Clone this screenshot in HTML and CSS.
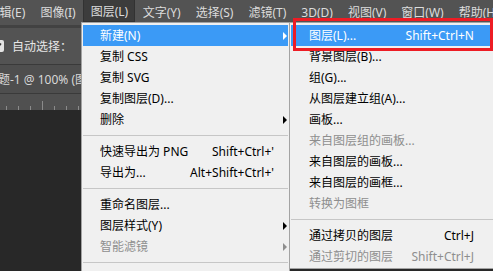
FILE: index.html
```html
<!DOCTYPE html>
<html lang="zh-CN">
<head>
    <meta charset="UTF-8">
    <meta name="viewport" content="width=device-width, initial-scale=1.0">
    <title>图层菜单</title>
    <link rel="stylesheet" href="styles.css">
</head>
<body>
   <div class="ps">
    <div class="menubar">
        <span class="mb-item first">编辑(E)</span>
        <span class="mb-item">图像(I)</span>
        <span class="mb-item active">图层(L)</span>
        <span class="mb-item">文字(Y)</span>
        <span class="mb-item">选择(S)</span>
        <span class="mb-item">滤镜(T)</span>
        <span class="mb-item">3D(D)</span>
        <span class="mb-item">视图(V)</span>
        <span class="mb-item">窗口(W)</span>
        <span class="mb-item">帮助(H)</span>
    </div>
    <div class="options">
        <span class="check">
            <svg width="12" height="12" viewBox="0 0 12 12"><path d="M3 6.2l2 2 4-4.6" fill="none" stroke="#333" stroke-width="1.6"/></svg>
        </span>
        <span class="opt-label">自动选择：</span>
        <span class="opt-divider"></span>
    </div>
    <div class="tabbar">
        <span class="doc-tab">未标题-1 @ 100% (图层 1, RGB/8#)</span>
    </div>
    <div class="ruler"></div>
    <div class="canvas"></div>

    <!-- 图层 menu -->
    <div class="menu main-menu">
        <div class="mi hl"><span>新建(N)</span><span class="key"></span><span class="arrow"></span></div>
        <div class="mi"><span>复制 CSS</span><span class="key"></span><span></span></div>
        <div class="mi"><span>复制 SVG</span><span class="key"></span><span></span></div>
        <div class="mi"><span>复制图层(D)...</span><span class="key"></span><span></span></div>
        <div class="mi"><span>删除</span><span class="key"></span><span class="arrow"></span></div>
        <div class="sep"></div>
        <div class="mi"><span>快速导出为 PNG</span><span class="key">Shift+Ctrl+'</span><span></span></div>
        <div class="mi"><span>导出为...</span><span class="key">Alt+Shift+Ctrl+'</span><span></span></div>
        <div class="sep"></div>
        <div class="mi"><span>重命名图层...</span><span class="key"></span><span></span></div>
        <div class="mi"><span>图层样式(Y)</span><span class="key"></span><span class="arrow"></span></div>
        <div class="mi off"><span>智能滤镜</span><span class="key"></span><span class="arrow"></span></div>
        <div class="sep"></div>
    </div>

    <!-- 新建 submenu -->
    <div class="menu sub-menu">
        <div class="mi hl"><span>图层(L)...</span><span class="key">Shift+Ctrl+N</span><span></span></div>
        <div class="mi"><span>背景图层(B)...</span><span class="key"></span><span></span></div>
        <div class="mi"><span>组(G)...</span><span class="key"></span><span></span></div>
        <div class="mi"><span>从图层建立组(A)...</span><span class="key"></span><span></span></div>
        <div class="mi"><span>画板...</span><span class="key"></span><span></span></div>
        <div class="mi off"><span>来自图层组的画板...</span><span class="key"></span><span></span></div>
        <div class="mi"><span>来自图层的画板...</span><span class="key"></span><span></span></div>
        <div class="mi"><span>来自图层的画框...</span><span class="key"></span><span></span></div>
        <div class="mi off"><span>转换为图框</span><span class="key"></span><span></span></div>
        <div class="sep"></div>
        <div class="mi"><span>通过拷贝的图层</span><span class="key">Ctrl+J</span><span></span></div>
        <div class="mi off"><span>通过剪切的图层</span><span class="key">Shift+Ctrl+J</span><span></span></div>
    </div>

    <div class="annot"></div>
   </div>
</body>
</html>
```

FILE: styles.css
```css
*{
    margin:0;
    padding:0;
    box-sizing:border-box;
}
body{
    width:493px;
    height:271px;
    overflow:hidden;
    background:#282828;
    font-family:"Noto Sans","Noto Sans CJK SC",sans-serif;
    font-size:12px;
}
.ps{
    position:relative;
    height:271px;
    overflow:hidden;
    display:flex;
    flex-direction:column;
}

/* top menu bar */
.menubar{
    display:flex;
    height:25px;
    flex-shrink:0;
    background:#535353;
    color:#dcdcdc;
    white-space:nowrap;
}
.mb-item{
    padding:0 7.5px;
    height:22px;
    line-height:25px;
}
.mb-item.first{
    margin-left:-20px;
}
.mb-item.active{
    background:#3c3c3c;
    border:1px solid #323232;
    border-top:none;
    padding:0 6px 0 6.5px;
    line-height:24px;
}

/* options bar */
.options{
    height:40px;
    flex-shrink:0;
    display:flex;
    align-items:center;
    background:#535353;
    border-top:3px solid #424242;
    border-bottom:1px solid #3a3a3a;
    color:#e6e6e6;
}
.check{
    width:12px;
    height:12px;
    margin-left:-8px;
    background:#e4e4e4;
    border-radius:2px;
    display:flex;
}
.opt-label{
    margin-left:8px;
}
.opt-divider{
    width:1px;
    height:20px;
    margin-left:14px;
    background:#6a6a6a;
}

/* document tab */
.tabbar{
    height:29px;
    flex-shrink:0;
    display:flex;
    align-items:center;
    background:#4e4e4e;
    border-bottom:1px solid #3a3a3a;
    color:#d8d8d8;
    white-space:nowrap;
}
.doc-tab{
    margin-left:-26px;
}

.ruler{
    height:16px;
    flex-shrink:0;
    background:
        linear-gradient(#8a8a8a,#8a8a8a) 42px 100% / 1px 9px no-repeat,
        repeating-linear-gradient(90deg,transparent 0 6px,#8a8a8a 6px 7px,transparent 7px 12px) 0 100% / 100% 4px no-repeat,
        #505050;
}
.canvas{
    flex:1;
    background:#282828;
}

/* dropdown menus */
.menu{
    position:absolute;
    top:22px;
    background:#f0f0f0;
    border:1px solid #a3a3a3;
    color:#000;
    white-space:nowrap;
}
.main-menu{
    left:81px;
    width:209px;
    height:270px;
    padding:2px 1px;
}
.sub-menu{
    left:289px;
    width:225px;
    padding:2px 1px 1px 1px;
}
.mi{
    display:grid;
    height:21px;
    line-height:21px;
    align-items:center;
}
.main-menu .mi{
    grid-template-columns:1fr auto 14px;
    padding-left:17px;
}
.sub-menu .mi{
    grid-template-columns:1fr auto 38px;
    padding-left:18px;
}
.mi.off{
    color:#8e8e8e;
}
.mi.hl{
    background:#3b9af6;
    color:#fff;
}
.arrow{
    width:0;
    height:0;
    margin-left:9px;
    border-left:4px solid #000;
    border-top:4px solid transparent;
    border-bottom:4px solid transparent;
}
.mi.hl .arrow{
    border-left-color:#fff;
}
.mi.off .arrow{
    border-left-color:#8e8e8e;
}
.sep{
    height:11px;
    display:flex;
    align-items:center;
}
.sep::after{
    content:"";
    flex:1;
    height:1px;
    background:#c6c6c6;
}

/* red highlight frame drawn over the screenshot */
.annot{
    position:absolute;
    left:293px;
    top:18px;
    width:200px;
    height:33px;
    border:3px solid #ed1c24;
}
```
